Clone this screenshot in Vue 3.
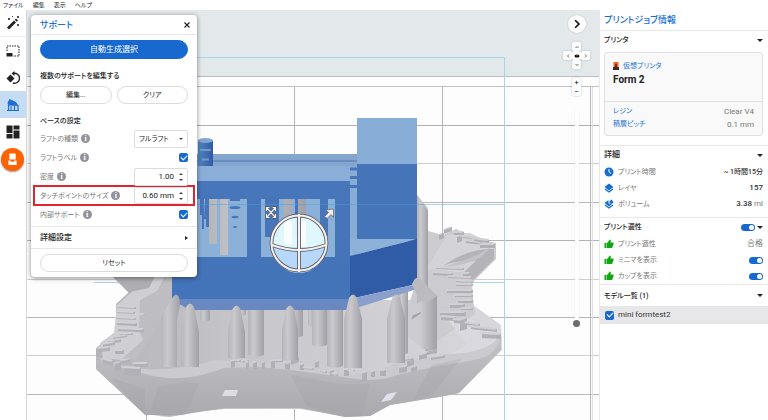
<script setup>
import { ref } from 'vue'

const menus = ['ファイル', '編集', '表示', 'ヘルプ']
const raftType = ref('full')
const raftLabel = ref(true)
const density = ref('1.00')
const touchpoint = ref('0.60 mm')
const innerSupport = ref(true)
const showPrintability = ref(true)
const showMinima = ref(true)
const showCups = ref(true)
const modelChecked = ref(true)
const zoomLevel = ref(100)

const gridRows = [
  { y: 76, c: '#b9bec3' }, { y: 86, c: '#bfc1c4' }, { y: 125, c: '#aeb0b5' }, { y: 163, c: '#cdced2' },
  { y: 202, c: '#b4b6ba' }, { y: 240, c: '#b0b2b6' }, { y: 279, c: '#cdced0' }, { y: 317, c: '#b4b5ba' },
  { y: 355, c: '#cfd0d3' }, { y: 394, c: '#b8b9bd' }
]
const gridCols = [146, 294, 442, 590]

// x, tip y, shoulder y, bottom y, width
const backPillars = [
  [200, 300, 300, 320, 10], [240, 300, 300, 314, 6], [248, 300, 300, 355, 16], [287, 300, 300, 336, 16],
  [308, 300, 300, 325, 6], [312, 300, 300, 345, 15], [327, 300, 300, 366, 16], [398, 290, 290, 353, 10]
]
const frontPillars = [
  [181, 303, 332, 367, 18], [228, 305, 332, 358, 17], [282, 305, 330, 360, 16],
  [344, 294, 319, 368, 18], [387, 294, 319, 363, 18]
]
const pillarPath = ([x, tip, sh, bot, w]) =>
  tip === sh
    ? `M${x} ${tip}H${x + w}V${bot}Q${x + w / 2} ${bot + 3} ${x} ${bot}Z`
    : `M${x} ${bot}V${sh}L${x + w / 2 - 4} ${tip + 4}Q${x + w / 2} ${tip - 3} ${x + w / 2 + 4} ${tip + 4}L${x + w} ${sh}V${bot}Z`

// embossed raft lettering: x, y, width, height, slope
const letters = [
  [117, 305, 19, 3, 1], [117, 310, 18, 3, 1], [116, 316, 20, 3, 1], [117, 321, 20, 4, 1], [118, 327, 20, 4, 1], [119, 332, 14, 3, 0],
  [136, 313, 9, 2, 0], [135, 328, 9, 4, 0], [113, 336, 14, 3, -2], [108, 340, 13, 4, -2], [103, 343, 12, 4, -2], [98, 347, 12, 5, -1],
  [115, 349, 9, 5, 0], [103, 357, 10, 6, 3], [115, 362, 6, 9, -1], [122, 359, 8, 4, -1], [134, 362, 14, 5, 0], [124, 366, 17, 9, 1],
  [231, 360, 4, 8, -1], [234, 359, 7, 3, 0], [243, 359, 6, 4, 0], [246, 361, 3, 8, 0], [253, 361, 4, 8, 0], [262, 361, 3, 8, 0], [271, 360, 4, 9, -1],
  [275, 359, 8, 3, 0], [285, 361, 5, 8, 1], [291, 359, 8, 6, -3], [300, 363, 4, 7, 0], [304, 366, 10, 3, 1],
  [315, 361, 4, 7, -1], [320, 369, 7, 3, 1], [330, 369, 4, 7, 0], [333, 372, 5, 3, 1], [344, 368, 5, 8, 0], [349, 369, 6, 2, 0],
  [362, 371, 5, 10, 0], [371, 370, 4, 7, 0], [380, 369, 6, 7, 0], [399, 366, 8, 7, -1], [407, 360, 7, 7, -2], [411, 366, 6, 6, -1],
  [402, 358, 11, 3, -1], [419, 354, 8, 6, -2], [427, 350, 10, 5, -2], [431, 356, 14, 4, -2], [425, 347, 12, 4, -1],
  [440, 311, 26, 5, 0], [450, 303, 15, 5, 0], [447, 289, 26, 4, 0], [456, 283, 17, 3, 0], [455, 294, 18, 3, 0], [458, 299, 15, 4, 0],
  [461, 307, 12, 3, 0], [441, 315, 15, 5, 1], [454, 318, 12, 5, 1], [460, 319, 7, 12, -2], [466, 321, 14, 4, 2], [471, 325, 16, 4, 2],
  [480, 326, 17, 4, 2], [482, 332, 19, 6, 1],
  [433, 271, 20, 4, 1], [436, 266, 28, 3, 1], [448, 275, 24, 3, 1], [456, 279, 17, 3, 1], [463, 272, 7, 4, 0],
  [439, 234, 5, 6, -2], [444, 229, 8, 5, -3], [454, 231, 10, 4, 0], [457, 236, 5, 7, -2], [462, 235, 13, 3, 1],
  [466, 239, 16, 4, 2], [474, 237, 15, 4, 2], [480, 243, 15, 5, 0]
]
const letterTop = ([x, y, w, h, s]) => `M${x} ${y}l${w} ${s}l-2 2l${-w} ${-s}Z`
const letterSide = ([x, y, w, h, s]) => `M${x} ${y + 1}l${w} ${s}v${h - 1}l${-w} ${-s}Z`
</script>

<template>
  <div class="app">
    <nav class="menubar">
      <button v-for="m in menus" :key="m" type="button">{{ m }}</button>
    </nav>

    <div class="workspace">
      <aside class="tools">
        <button type="button" class="tool first" aria-label="自動">
          <svg viewBox="0 0 14 14"><path d="M1 11.500 8 4.500l2 2-7 7Z" fill="#222" /><path d="m8.700 3.800 1.300-1.300 2 2-1.300 1.300Z" fill="#222" /><path d="m2 2 2 2m0-2L2 4m9-4 2 2m0-2-2 2m0 6 2 2m0-2-2 2M6 0l1 1" stroke="#222" stroke-width=".8" /></svg>
        </button>
        <button type="button" class="tool" aria-label="サイズ">
          <svg viewBox="0 0 14 14"><path d="M1 7V2h12v10H7" fill="none" stroke="#222" stroke-width="1" stroke-dasharray="1.500 1" /><path d="M.5 9h6v3.500h-6Z" fill="#222" /></svg>
        </button>
        <button type="button" class="tool" aria-label="向き">
          <svg viewBox="0 0 14 14"><path d="m4.500 3.500 4 4-4 4-4-4Z" fill="#222" /><path d="M7 2.500a5 5 0 1 1 0 9.500" fill="none" stroke="#222" stroke-width="1.400" /><path d="M8.500 0v5L5.500 2.500Z" fill="#222" /></svg>
        </button>
        <button type="button" class="tool active" aria-label="サポート">
          <svg viewBox="0 0 14 14"><path d="m3.500 1 6.500 3 2.500 4-10-.5L1.500 5Z" fill="#1a6fd0" /><path d="M1 12.500h12M2.500 12V7M5 12V8M8.500 12V8m3.500 4V7" stroke="#1a6fd0" stroke-width="1.200" /></svg>
        </button>
        <button type="button" class="tool" aria-label="レイアウト">
          <svg viewBox="0 0 14 14"><path d="M.5.500h6v7.500h-6Zm7 0h6v4h-6ZM.5 9h6v4.500h-6Zm7-3.500h6v8h-6Z" fill="#222" /></svg>
        </button>
        <button type="button" class="print" aria-label="プリント">
          <svg viewBox="0 0 12 14"><path d="M2.500.500h7V7h-7Z" fill="#fff" /><path d="M1.500 8H4v1.500h4V8h2.500v5h-9Z" fill="#fff" /></svg>
        </button>
      </aside>

      <main class="viewport">
        <svg class="scene" viewBox="27 10 572 410" preserveAspectRatio="xMinYMin slice" aria-hidden="true">
          <defs>
            <linearGradient id="pillar"><stop offset="0" stop-color="#b5b5ba" /><stop offset=".35" stop-color="#cacace" /><stop offset="1" stop-color="#a0a0a6" /></linearGradient>
            <linearGradient id="skirt" x2="0" y2="1"><stop offset="0" stop-color="#c4c4c8" /><stop offset="1" stop-color="#a9a9ae" /></linearGradient>
            <linearGradient id="floor"><stop offset="0" stop-color="#b4b4b9" /><stop offset=".4" stop-color="#c8c8cc" /><stop offset="1" stop-color="#d7d7dc" /></linearGradient>
            <linearGradient id="front" x2="0" y2="1"><stop offset="0" stop-color="#4876ba" /><stop offset="1" stop-color="#4373b8" /></linearGradient>
            <linearGradient id="tube"><stop offset="0" stop-color="#5285c2" /><stop offset="1" stop-color="#3159a5" /></linearGradient>
          </defs>
          <rect x="27" y="10" width="572" height="410" fill="#fdfdfd" />
          <rect x="27" y="10" width="572" height="66" fill="#e3e8eb" />
          <rect v-for="g in gridRows" :key="g.y" x="27" :y="g.y" width="572" height="1" :fill="g.c" />
          <rect v-for="x in gridCols" :key="x" :x="x" y="87" width="1" height="333" fill="#b4b6ba" />
          <rect x="592" y="87" width="1" height="333" fill="#dedfe1" />
          <path d="M94 282.500h410M197 57.500h307.500V420" fill="none" stroke="#a9d5eb" />

          <!-- raft -->
          <path d="M116 276h60l-4 24h260l40-20 1 25 28 20 1 25-43 43-14 3-55 9-20 11-25 1-20-4-25-4h-75l-25 2-30 6-25-3-49-45V348l7-5 14-13-1-26 13-12Z" fill="url(#floor)" />
          <path d="M116 276h56v24l-35 60-28-3-13-9 7-5 22-14-8-20 13-18Z" fill="#bdbdc2" />
          <path d="M129 276h36l-8 15-17 9-1 30 4 10-22 20-18-2-3-15 14-10 3-28 14-12Z" fill="#cfcfd3" />
          <path d="M112 276h43l-6 12-15 3-5 2-12-12Z" fill="#adadb2" />
          <path d="M417 195l11 13v23l15 4 13-6 22 10 18 4v16l-25 25 4 30-50 36-25-20 17-50Z" fill="#ccccd0" />
          <path d="M447 235l23-2 25 12-3 10q-12 4-19 13l-8 5-35-4-12 13Z" fill="#d3d3d8" />
          <path d="M494 249v10l-21 21-9-8 12-11q-20-1-33 5 25-18 51-17Z" fill="#b3b3b8" />
          <path d="M444 267l20-7q24-8 29-17-6 12-20 18-13 5-29 6Z" fill="#c2c2c7" />
          <path d="M448 320l22-1 31 15q5 20-20 27-27 5-39-3 17-8 25-14-11-12-19-24Z" fill="#d9d9df" />
          <path d="M501 335v15l-42 43-14 3-55 9-20 11-25 1-45-9h-75l-45 7h-35l-49-46v-13q22 11 50 15 30 3 64-8l66 4 75 10q25 0 45-13l50-10q48 1 55-21Z" fill="url(#skirt)" />
          <path d="M96 357q20 9 48 12 34 2 71-9l90 5 38 8q26 3 50-9l51-10q49 0 57-22-1 16-14 24-10 5-45 9l-45 10q-20 8-48 3l-50-7-40-4-35 1q-45 18-86 4-29-7-42-15Z" fill="#cbcbcf" />
          <path d="m112 378 33 11v26l-14-15ZM158 386l30-4-15 34-23-1ZM199 384l-14 31-25 2 23-35ZM345 385l-10 29-28-8-16-31ZM370 384l-8 32-17 1-10-4 10-29ZM432 365l29-6-28 35-20 6Z" fill="#9e9ea4" opacity=".25" />
          <path d="m222 396 3-6h13l-2 6Z" fill="#dedee1" /><path d="m381 402 6-8 10-2-6 8Z" fill="#e0e0ea" />
          <path d="M412 319l10-7-9 4Z" fill="#a3a3a8" stroke="#a3a3a8" />
          <g v-for="(l, i) in letters" :key="i"><path :d="letterSide(l)" fill="#b0b0b6" /><path :d="letterTop(l)" fill="#d0d0d5" /></g>

          <!-- pillars behind the model -->
          <path d="M417 195l11 16v92h-11Z" fill="url(#pillar)" />
          <path v-for="(p, i) in backPillars" :key="'b' + i" :d="pillarPath(p)" fill="url(#pillar)" />

          <!-- model -->
          <path d="M172 154h186v30H172Z" fill="#84a6ce" /><path d="M172 161h186" stroke="#4b76b0" />
          <path d="M172 166h178v15H172Z" fill="#8aaed8" />
          <path d="M198 141h15v25h-15Z" fill="url(#tube)" /><ellipse cx="205.500" cy="140.500" rx="7.500" ry="2.500" fill="#82a6d2" />
          <path d="M200 150h11m-9 9.500h7" stroke="#7499ca" stroke-width="2" />
          <rect x="357" y="118" width="60" height="46" fill="#88add6" />
          <rect x="350" y="166" width="7" height="92" fill="#88add5" />
          <path d="M350 169h7m-7 8.500h7m-7 9h7" stroke="#4876b8" stroke-width="3" />
          <rect x="357" y="164" width="60" height="76" fill="#4674b8" />
          <path d="M350 256v-17h67Z" fill="#8db2d9" />
          <path d="m350 256 67-17v45l-67 15Z" fill="#305ba7" /><path d="m350 299 67-15v5l-67 21Z" fill="#8a9fcb" />
          <path d="M172 181h178v118H172Z" fill="url(#front)" /><path d="M172 299h178v11H190l-18-10Z" fill="#6988bf" />
          <path d="M197 199h50v58h-50ZM261 199h74v58h-74Z" fill="#8cb1d9" />
          <path d="M200 199h4v30h-2v-14h-2Zm5 0h4v28h-3v-8h-2ZM265 199h14v38h-14Zm30 0h5v38h-5Zm25 0h8v37h-8Z" fill="#4775b9" />
          <path d="M209 199h8v45h-8Zm11 0h8v56h-8Zm64 0h8v46h-8Zm14 0h8v46h-8Z" fill="url(#pillar)" />
          <path d="M230 200h10" stroke="#4775b9" stroke-width="2" />
          <ellipse cx="235" cy="207.500" rx="5.500" ry="1.500" fill="#4775b9" /><ellipse cx="235" cy="217" rx="3.500" ry="1.200" fill="#4775b9" /><ellipse cx="235" cy="227" rx="2" ry="1" fill="#4775b9" />
          <path d="M197 204.500h307" stroke="#4aa0d8" opacity=".45" />

          <!-- pillars in front of the model -->
          <path d="M161 367v-50l12-20q3-5 6 0l1 8-3 15v47Z" fill="url(#pillar)" />
          <path v-for="(p, i) in frontPillars" :key="'f' + i" :d="pillarPath(p)" fill="url(#pillar)" />
          <path d="m412 284 3-5q4-3 7 2l15 15v52q-8 3-16 0v-46Z" fill="url(#pillar)" />
          <path d="m412 284 3-5q4-3 7 2l15 15-10 6-8-1Z" fill="#bbbbc0" />

          <!-- view sphere -->
          <circle cx="299" cy="243" r="27" fill="#e6fcff" opacity=".93" />
          <path d="M272 246q27 10 54 0a27 27 0 0 1-54 0Z" fill="#b7d8fa" />
          <path d="M284 221h8v23h-8Zm14 0h8v25h-8Z" fill="#fff" opacity=".8" />
          <g fill="none" stroke="#62616b" stroke-width="3.800"><circle cx="299" cy="243" r="27.500" /><path d="M299 214v58M272 245q27 10 54 0" /></g>
          <g fill="none" stroke="#f2f0f0" stroke-width="2"><circle cx="299" cy="243" r="27.500" /><path d="M299 214v58M272 245q27 10 54 0" /></g>
          <g fill="none" stroke="#55555c" stroke-width="2.600"><path d="m267 208 8 9m0-9-8 9M266.500 211v-3.500h3m3 0h3v3.500m0 3v3.500h-3m-3 0h-3V214" /></g>
          <g fill="none" stroke="#f1eff0" stroke-width="1.200"><path d="m267 208 8 9m0-9-8 9M266.500 211v-3.500h3m3 0h3v3.500m0 3v3.500h-3m-3 0h-3V214" /></g>
          <path d="m324.500 216.500 4-4-3-2.500 8-1v8.500l-2.500-3-4 4Z" fill="#f4f0f1" stroke="#66656d" stroke-width=".8" />
        </svg>

        <section class="support">
          <header class="support-head"><h2>サポート</h2><button type="button" class="close" aria-label="閉じる"><svg viewBox="0 0 6 6"><path d="m.5.500 5 5m0-5-5 5" stroke="#222" stroke-width="1.200" /></svg></button></header>
          <div class="support-body">
            <button type="button" class="pill primary">自動生成選択</button>
            <h3>複数のサポートを編集する</h3>
            <div class="pair"><button type="button" class="pill">編集...</button><button type="button" class="pill">クリア</button></div>
            <h3 class="base">ベースの設定</h3>
            <div class="field"><label for="raft">ラフトの種類</label><i class="info">i</i>
              <span class="control"><select id="raft" v-model="raftType"><option value="full">フルラフト</option></select><i class="caret"></i></span></div>
            <div class="field"><label for="raft-label">ラフトラベル</label><i class="info">i</i><input id="raft-label" v-model="raftLabel" type="checkbox" class="check"></div>
            <div class="field"><label for="density">密度</label><i class="info">i</i>
              <span class="control"><input id="density" v-model="density" type="text"><span class="stepper"><button type="button" class="up" aria-label="密度を上げる"></button><button type="button" class="down" aria-label="密度を下げる"></button></span></span></div>
            <div class="field marked"><label for="touch">タッチポイントのサイズ</label><i class="info">i</i>
              <span class="control"><input id="touch" v-model="touchpoint" type="text"><span class="stepper"><button type="button" class="up" aria-label="サイズを上げる"></button><button type="button" class="down" aria-label="サイズを下げる"></button></span></span></div>
            <div class="field"><label for="inner">内部サポート</label><i class="info">i</i><input id="inner" v-model="innerSupport" type="checkbox" class="check"></div>
          </div>
          <button type="button" class="advanced"><span>詳細設定</span><i></i></button>
          <footer><button type="button" class="pill">リセット</button></footer>
        </section>

        <div class="view-controls">
          <button type="button" class="collapse" aria-label="パネルを閉じる"><svg viewBox="0 0 8 8"><path d="m2.500 1 3 3-3 3" fill="none" stroke="#111" stroke-width="1.400" /></svg></button>
          <div class="cross">
            <button type="button" class="n" aria-label="上"><svg viewBox="0 0 6 6"><path d="m1.500 4 1.500-1.500L4.500 4" /></svg></button>
            <button type="button" class="w" aria-label="左"><svg viewBox="0 0 6 6"><path d="M4 1.500 2.500 3 4 4.500" /></svg></button>
            <button type="button" class="c" aria-label="正面"><svg viewBox="0 0 6 6"><ellipse cx="3" cy="3" rx="2.500" ry="1.600" /><circle cx="3" cy="2.800" r=".5" class="pupil" /></svg></button>
            <button type="button" class="e" aria-label="右"><svg viewBox="0 0 6 6"><path d="M2 1.500 3.500 3 2 4.500" /></svg></button>
            <button type="button" class="s" aria-label="下"><svg viewBox="0 0 6 6"><path d="M1.500 2 3 3.500 4.500 2" /></svg></button>
          </div>
          <div class="zoom"><button type="button">+</button><button type="button">−</button></div>
          <input v-model="zoomLevel" type="range" min="0" max="100" class="slider" aria-label="ズーム">
        </div>
      </main>

      <aside class="job">
        <h1>プリントジョブ情報</h1>
        <section class="printer">
          <h2>プリンタ<i class="tri"></i></h2>
          <div class="card">
            <div class="card-top">
              <a href="#"><svg viewBox="0 0 6 8"><path d="M.5 0h5v5h-5Z" fill="#f26322" /><path d="M0 5h6v3H0Z" fill="#3c2a2e" /><path d="M2 2h2v3H2Z" fill="#7a2c20" /></svg>仮想プリンタ</a>
              <strong>Form 2</strong>
            </div>
            <dl><div><dt>レジン</dt><dd>Clear V4</dd></div><div><dt>積層ピッチ</dt><dd>0.1 mm</dd></div></dl>
          </div>
        </section>
        <section class="details">
          <h2>詳細<i class="tri"></i></h2>
          <ul>
            <li><svg viewBox="0 0 10 10"><circle cx="5" cy="5" r="4.500" fill="#1a6dd0" /><path d="M5 2v3l2 1.500" fill="none" stroke="#fff" /></svg>プリント時間<b class="time">~ 1時間15分</b></li>
            <li><svg viewBox="0 0 10 10"><path d="m5 .5 4.500 3.500L5 7.500.5 4Z" fill="#1a6dd0" /><path d="m1 6 4 3 4-3" fill="none" stroke="#1a6dd0" stroke-width="1.300" /></svg>レイヤ<b>157</b></li>
            <li><svg viewBox="0 0 10 10"><path d="M4.500 1v3.500H8.500L5 7.500.5 4Z" fill="#1a6dd0" /><path d="m1 6 4 3 4-3" fill="none" stroke="#1a6dd0" stroke-width="1.300" /><path d="M7.500.500Q10 3 9 4T6 4t1.500-3.500" fill="#1a6dd0" /></svg>ボリューム<b>3.38 <em>ml</em></b></li>
          </ul>
        </section>
        <section class="printability">
          <h2><label for="printability">プリント適性</label><input id="printability" v-model="showPrintability" type="checkbox" class="toggle"><i class="tri"></i></h2>
          <ul>
            <li><svg viewBox="0 0 10 10"><path d="M.5 4h2v5h-2ZM3 4l3-3.500q1.500 0 .5 3H9q1 .5.500 2L8 9H3Z" fill="#11a611" /></svg>プリント適性<span class="value">合格</span></li>
            <li><svg viewBox="0 0 10 10"><path d="M.5 4h2v5h-2ZM3 4l3-3.500q1.500 0 .5 3H9q1 .5.500 2L8 9H3Z" fill="#11a611" /></svg><label for="minima">ミニマを表示</label><input id="minima" v-model="showMinima" type="checkbox" class="toggle"></li>
            <li><svg viewBox="0 0 10 10"><path d="M.5 4h2v5h-2ZM3 4l3-3.500q1.500 0 .5 3H9q1 .5.500 2L8 9H3Z" fill="#11a611" /></svg><label for="cups">カップを表示</label><input id="cups" v-model="showCups" type="checkbox" class="toggle"></li>
          </ul>
        </section>
        <section class="models">
          <h2>モデル一覧 (1)<i class="tri"></i></h2>
          <div class="model"><input id="model" v-model="modelChecked" type="checkbox" class="check"><label for="model">mini formtest2</label></div>
        </section>
      </aside>
    </div>
  </div>
</template>

<style>
body { margin: 0; background: #fff; }
</style>

<style scoped>
* { box-sizing: border-box; }
.app { min-height: 100vh; display: flex; flex-direction: column; font: 7px/12px Roboto, "Noto Sans CJK JP", sans-serif; font-feature-settings: "palt"; color: #777; background: #fff; }
button, input, select { font: inherit; font-feature-settings: inherit; color: inherit; background: none; border: 0; padding: 0; margin: 0; min-width: 0; }
h1, h2, h3, ul, dl, dd { margin: 0; padding: 0; }
i { font-style: normal; }
svg { display: block; }
.menubar { display: flex; gap: 9px; height: 10px; padding-left: 3px; }
.menubar button { font-size: 6px; line-height: 10px; color: #222; }
.workspace { flex: 1; display: grid; grid-template-columns: 27px minmax(0, 1fr) 169px; }

.tools { background: #fff; border-right: 1px solid #d5d7da; display: flex; flex-direction: column; align-items: stretch; }
.tool { height: 27px; display: grid; place-items: center; }
.tool.first { border-bottom: 1px solid #eee; }
.tool svg { width: 14px; height: 14px; }
.tool.active { background: #c5dcf5; }
.print { width: 23px; height: 23px; margin: 3px 1px; border-radius: 50%; background: #ff6200; display: grid; place-items: center; box-shadow: 0 1px 2px #0006; }
.print svg { width: 11px; height: 13px; }

.viewport { position: relative; overflow: hidden; }
.scene { position: absolute; inset: 0; width: 100%; height: 100%; }

.support { position: absolute; left: 4px; top: 5px; width: 166px; background: #fff; border-radius: 4px; box-shadow: 0 1px 5px #0007; color: #777; }
.support-head { display: flex; justify-content: space-between; align-items: center; height: 20px; padding: 0 7px 0 9px; border-bottom: 1px solid #e6e6e6; }
.support-head h2 { font-size: 9px; font-weight: 500; color: #1a6fd0; }
.close svg { width: 6px; height: 6px; }
.support-body { padding: 5px 9px 2px; border-bottom: 1px solid #e6e6e6; }
.pill { height: 18px; width: 100%; border: 1px solid #dcdcdc; border-radius: 9px; background: #fff; color: #222; line-height: 16px; }
.pill.primary { height: 19px; border-radius: 10px; background: #1769cf; border-color: #1769cf; color: #fff; font-size: 8px; }
h3 { font-size: 7px; font-weight: 500; color: #222; margin-top: 11px; }
.pair { display: grid; grid-template-columns: 1fr 1fr; gap: 5px; margin-top: 4px; }
h3.base { margin: 11px 0 2px; }
.field { display: flex; align-items: center; gap: 3px; height: 19px; }
.field.marked { height: 21px; margin: -1px -7px; padding: 0 5px; border: 2px solid #e22430; }
.info { width: 9px; height: 9px; border-radius: 50%; background: #92929b; color: #fff; font: bold 8px/9px "Liberation Serif", serif; text-align: center; }
.control { margin-left: auto; width: 54px; height: 18px; border: 1px solid #ddd; border-radius: 2px; display: flex; align-items: center; color: #222; background: #fff; }
.marked .control { height: 17px; }
.control select { appearance: none; flex: 1; height: 16px; padding-left: 4px; }
.caret { border: 2px solid transparent; border-top-color: #444; border-bottom: 0; margin-right: 4px; }
.control input { flex: 1; width: 100%; text-align: right; font-size: 8px; }
.stepper { display: flex; flex-direction: column; gap: 4px; padding: 0 4px 0 5px; }
.stepper button { border: 2px solid transparent; }
.stepper .up { border-top: 0; border-bottom-color: #444; }
.stepper .down { border-bottom: 0; border-top-color: #444; }
.check { appearance: none; flex: none; width: 9px; height: 9px; border-radius: 2px; background: #1769cf; display: grid; place-items: center; }
.field .check { margin-left: auto; }
.check:checked::before { content: ""; width: 5px; height: 3px; border: solid #fff; border-width: 0 0 1px 1px; transform: translateY(-1px) rotate(-45deg); }
.advanced { width: 100%; height: 22px; padding: 0 9px; display: flex; justify-content: space-between; align-items: center; font-size: 8px; font-weight: 500; color: #222; border-bottom: 1px solid #e6e6e6; }
.advanced i { border: 2px solid transparent; border-left: 3px solid #222; border-right: 0; }
.support footer { padding: 5px 9px; }

.view-controls { position: absolute; right: 9px; top: 5px; width: 27px; display: flex; flex-direction: column; align-items: center; gap: 9px; }
.collapse { width: 18px; height: 18px; border-radius: 50%; background: #fff; display: grid; place-items: center; box-shadow: 0 0 2px #0003; }
.collapse svg { width: 10px; height: 10px; }
.cross { display: grid; grid-template: "a n b" 9px "w c e" 9px "x s y" 9px / 9px 9px 9px; filter: drop-shadow(0 0 1px #0003); }
.cross button { background: #fff; border-radius: 2px; display: grid; place-items: center; }
.cross svg { width: 6px; height: 6px; }
.cross path { fill: none; stroke: #444; stroke-width: .8; }
.cross .pupil { fill: #fff; }
.n { grid-area: n; } .w { grid-area: w; } .c { grid-area: c; } .e { grid-area: e; } .s { grid-area: s; }
.zoom { display: flex; flex-direction: column; width: 9px; background: #fff; border-radius: 2px; box-shadow: 0 0 2px #0004; }
.zoom button { height: 9px; font-size: 8px; line-height: 9px; color: #111; }
.slider { appearance: none; writing-mode: vertical-lr; width: 8px; height: 217px; margin-top: 5px; }
.slider::-webkit-slider-runnable-track { width: 4px; height: 100%; margin: 0 2px; background: #fff; box-shadow: 0 0 1px #0004; }
.slider::-webkit-slider-thumb { appearance: none; width: 7px; height: 7px; margin-left: -2px; border-radius: 50%; background: #6c6c6c; }

.job { border-left: 1px solid #e8e8e8; background: #fff; padding-left: 4px; color: #777; }
.job h1 { height: 21px; font-size: 9px; font-weight: 500; line-height: 20px; color: #1a6fd0; border-bottom: 1px solid #e8e8e8; margin-left: -4px; padding-left: 4px; }
.job h2 { height: 18px; display: flex; align-items: center; font-size: 7px; font-weight: 500; color: #222; padding-right: 5px; }
.job .details h2 { font-size: 8px; }
.tri { margin-left: auto; border: 3px solid transparent; border-top-color: #222; border-bottom: 0; }
.printer { padding-bottom: 9px; }
.card { margin: 3px 5px 0 0; border: 1px solid #e0e0e0; border-radius: 3px; background: #f9f9f9; }
.card-top { height: 49px; padding: 7px 8px; border-bottom: 1px solid #e0e0e0; }
.card a { display: flex; align-items: center; gap: 4px; color: #2274d2; text-decoration: none; }
.card a svg { width: 6px; height: 8px; }
.card strong { display: block; margin-top: 1px; font-size: 10px; line-height: 14px; color: #222; }
.card dl { padding: 3px 8px 4px; }
.card dl div { display: flex; justify-content: space-between; line-height: 13px; }
.card dt { color: #2274d2; }
.card dd { font-size: 8px; }
.details, .printability, .models { border-top: 1px solid #e8e8e8; margin-left: -4px; padding-left: 4px; }
ul { list-style: none; }
li { height: 16px; display: flex; align-items: center; gap: 4px; padding-right: 5px; }
li svg { width: 10px; height: 10px; }
li b { margin-left: auto; font-size: 8px; font-weight: 500; color: #333; }
li .time { font-size: 7px; }
li em { font-style: normal; font-weight: 400; color: #777; }
.details { padding-bottom: 5px; }
.value { margin-left: auto; font-size: 8px; }
.toggle { appearance: none; width: 14px; height: 7px; border-radius: 4px; background: #1769cf; margin-left: auto; display: flex; align-items: center; justify-content: flex-end; padding-right: 1px; }
.toggle::before { content: ""; width: 5px; height: 5px; border-radius: 50%; background: #fff; }
.toggle:not(:checked) { background: #aaa; justify-content: flex-start; }
.toggle + .tri { margin-left: 2px; }
.models h2 { height: 21px; }
.model { display: flex; align-items: center; gap: 4px; height: 18px; margin-left: -4px; padding-left: 5px; background: #e7e7e9; font-size: 8px; color: #333; }
</style>
